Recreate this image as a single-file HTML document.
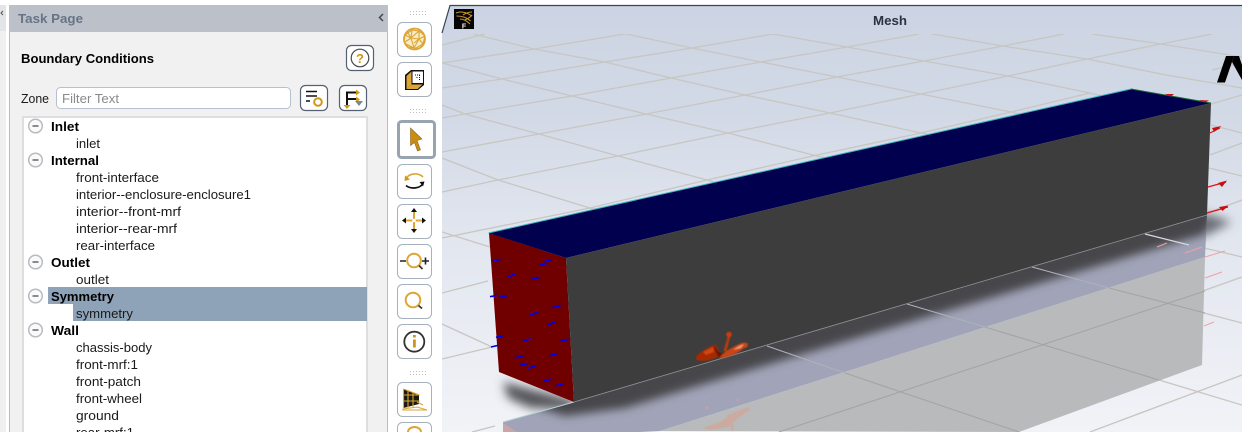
<!DOCTYPE html>
<html><head><meta charset="utf-8"><title>Mesh</title>
<style>
html,body{margin:0;padding:0;background:#fff;width:1242px;height:432px;overflow:hidden}
svg{display:block}
text{font-family:"Liberation Sans",sans-serif;font-size:12.5px;fill:#1a1a1a}
.b{font-weight:bold;fill:#000}
.g line,.g polyline{stroke:#c7c6c2;stroke-width:1.300;fill:none}
.r line{stroke:#a4a4a3;stroke-width:1.100}
.btn{fill:#fff;stroke:#a6b1bd;stroke-width:1}
.dark{fill:#fff;stroke:#566273;stroke-width:1.200}
.m{stroke:#0000f0;stroke-width:1.600}
</style></head><body>
<svg width="1242" height="432" viewBox="0 0 1242 432" xmlns="http://www.w3.org/2000/svg">
<defs>
<linearGradient id="bg" x1="0" y1="0" x2="0" y2="1"><stop offset="0" stop-color="#ccd4e3"/><stop offset=".25" stop-color="#d2d9e6"/><stop offset=".55" stop-color="#e2e6ef"/><stop offset="1" stop-color="#f1f3f7"/></linearGradient>
<filter id="bl" x="-20%" y="-50%" width="140%" height="200%"><feGaussianBlur stdDeviation="4.500"/></filter>
<filter id="bl2" x="-30%" y="-80%" width="160%" height="260%"><feGaussianBlur stdDeviation="5"/></filter>
<filter id="s1"><feGaussianBlur stdDeviation=".5"/></filter>
<clipPath id="gc"><rect x="442" y="34" width="800" height="398"/></clipPath>
<clipPath id="blue"><polygon points="503,422 574,402 1207,215 1205,257 660,431 640,432 503,432"/></clipPath>
</defs>

<!-- left strip -->
<rect x="0" y="5" width="6" height="427" fill="#f0f0f1"/>
<rect x="0" y="5" width="6" height="26" fill="#e2e4e7"/>
<path d="M3 11l-2 2 2 2" stroke="#555" fill="none"/>

<!-- task panel -->
<rect x="9" y="5" width="379" height="427" fill="#f1f1f1"/>
<path d="M9.500 5V432M387.500 5V432" fill="none" stroke="#b9bdc3"/>
<rect x="9" y="5" width="379" height="27" fill="#bcc1c9"/>
<text x="18" y="23" class="b" style="fill:#667487" textLength="65" lengthAdjust="spacingAndGlyphs">Task Page</text>
<path d="M383 14l-3.500 3.500 3.500 3.500" stroke="#404652" stroke-width="1.500" fill="none"/>
<text x="21" y="63" class="b" textLength="133" lengthAdjust="spacingAndGlyphs">Boundary Conditions</text>

<rect x="346.500" y="45.500" width="27" height="25" rx="5" class="dark"/>
<circle cx="360" cy="58" r="8.800" fill="none" stroke="#44494f" stroke-width="1.200"/>
<text x="360" y="63" text-anchor="middle" style="font-size:13px;font-weight:bold;fill:#cf9415">?</text>

<text x="21" y="103" textLength="28" lengthAdjust="spacingAndGlyphs">Zone</text>
<rect x="56.500" y="87.500" width="234" height="21" rx="4" fill="#fff" stroke="#b7c0cf"/>
<text x="62" y="103" style="fill:#8a8a8a" textLength="57" lengthAdjust="spacingAndGlyphs">Filter Text</text>

<rect x="300.500" y="85.500" width="27" height="25" rx="5" class="dark"/>
<path d="M306 91.500h11M306 96h11M306 101h4" stroke="#111" stroke-width="1.600"/>
<circle cx="318" cy="102" r="3.800" fill="none" stroke="#d0961a" stroke-width="2"/>
<rect x="339.500" y="85.500" width="27" height="25" rx="5" class="dark"/>
<path d="M347 106V92.500h10M347 99h9" stroke="#111" stroke-width="2" fill="none"/>
<path d="M356 89.500l4 3-4 3zM356 96.500l4 3-4 3zM343.500 105h7l-3.500 4z" fill="#d0961a"/>
<path d="M355 101h8l-4 5z" fill="#7d8794"/>

<!-- tree -->
<rect x="22" y="116" width="346" height="316" fill="#fff"/>
<path d="M23 432V117H367V432" fill="none" stroke="#dedede" stroke-width="2"/>
<rect x="48" y="287" width="319" height="17" fill="#8ea3b8"/>
<rect x="73" y="304" width="294" height="17" fill="#8ea3b8"/>
<g fill="#fafafa" stroke="#b8bcc2" stroke-width="1.500">
<circle cx="35.500" cy="126" r="6.800"/><circle cx="35.500" cy="160" r="6.800"/><circle cx="35.500" cy="262" r="6.800"/><circle cx="35.500" cy="296" r="6.800"/><circle cx="35.500" cy="330" r="6.800"/>
</g>
<path d="M32.500 126h6M32.500 160h6M32.500 262h6M32.500 296h6M32.500 330h6" stroke="#666" stroke-width="1.500"/>
<text x="51" y="131" class="b" textLength="28" lengthAdjust="spacingAndGlyphs">Inlet</text>
<text x="76" y="148" textLength="24" lengthAdjust="spacingAndGlyphs">inlet</text>
<text x="51" y="165" class="b" textLength="48" lengthAdjust="spacingAndGlyphs">Internal</text>
<text x="76" y="182" textLength="83" lengthAdjust="spacingAndGlyphs">front-interface</text>
<text x="76" y="199" textLength="175" lengthAdjust="spacingAndGlyphs">interior--enclosure-enclosure1</text>
<text x="76" y="216" textLength="105" lengthAdjust="spacingAndGlyphs">interior--front-mrf</text>
<text x="76" y="233" textLength="101" lengthAdjust="spacingAndGlyphs">interior--rear-mrf</text>
<text x="76" y="250" textLength="79" lengthAdjust="spacingAndGlyphs">rear-interface</text>
<text x="51" y="267" class="b" textLength="39" lengthAdjust="spacingAndGlyphs">Outlet</text>
<text x="76" y="284" textLength="33" lengthAdjust="spacingAndGlyphs">outlet</text>
<text x="51" y="301" class="b" textLength="63" lengthAdjust="spacingAndGlyphs">Symmetry</text>
<text x="76" y="318" textLength="57" lengthAdjust="spacingAndGlyphs">symmetry</text>
<text x="51" y="335" class="b" textLength="28" lengthAdjust="spacingAndGlyphs">Wall</text>
<text x="76" y="352" textLength="76" lengthAdjust="spacingAndGlyphs">chassis-body</text>
<text x="76" y="369" textLength="62" lengthAdjust="spacingAndGlyphs">front-mrf:1</text>
<text x="76" y="386" textLength="65" lengthAdjust="spacingAndGlyphs">front-patch</text>
<text x="76" y="403" textLength="66" lengthAdjust="spacingAndGlyphs">front-wheel</text>
<text x="76" y="420" textLength="43" lengthAdjust="spacingAndGlyphs">ground</text>
<text x="76" y="437" textLength="58" lengthAdjust="spacingAndGlyphs">rear-mrf:1</text>

<!-- toolbar -->
<g stroke="#bdbdbd" stroke-width="1" stroke-dasharray="1 2">
<path d="M410 11.500h16M410 14.500h16M410 109.500h16M410 112.500h16M410 371.500h16M410 374.500h16"/>
</g>
<rect x="397.500" y="22.500" width="34" height="34" rx="5" class="btn"/>
<rect x="397.500" y="62.500" width="34" height="34" rx="5" class="btn"/>
<rect x="398.500" y="121.500" width="36" height="36" rx="3" fill="#fff" stroke="#98a4b0" stroke-width="3"/>
<rect x="397.500" y="164.500" width="34" height="34" rx="5" class="btn"/>
<rect x="397.500" y="204.500" width="34" height="34" rx="5" class="btn"/>
<rect x="397.500" y="244.500" width="34" height="34" rx="5" class="btn"/>
<rect x="397.500" y="284.500" width="34" height="34" rx="5" class="btn"/>
<rect x="397.500" y="324.500" width="34" height="34" rx="5" class="btn"/>
<rect x="397.500" y="382.500" width="34" height="34" rx="5" class="btn"/>
<path d="M397.500 432V427.500a5 5 0 0 1 5-5h24a5 5 0 0 1 5 5V432" fill="#fff" stroke="#a6b1bd"/>

<!-- sphere -->
<circle cx="414.500" cy="39" r="10.500" fill="#f8ebc6" stroke="#dca637" stroke-width="1.800"/>
<path d="M405 35l7-5 7 1 6 5-2 8-7 4-8-1-4-6zM412 30l-1 8 8-7 0 8-8-1-6-3M419 39l6-3M419 39l4 5M419 39l-5 9M411 38l3 10M411 38l-6 4M406 44l8 4M408 33l3 5M414 43l5-4" fill="none" stroke="#dca637" stroke-width="1.100"/>
<!-- cube -->
<path d="M405 75l6-5h13v15l-6 5h-13z" fill="#111"/>
<path d="M406.500 76l5-4.500v13l-5 4.500z" fill="#dca637"/>
<path d="M411.500 84.500h11l-5 4.500h-11z" fill="#dca637"/>
<rect x="412.500" y="71.500" width="10.500" height="11.500" fill="#fff"/>
<path d="M415 75h5M419.500 75v5M417 77v1" stroke="#111" stroke-dasharray="1 1" fill="none"/>
<!-- cursor -->
<polygon points="410.500,128 422,139 417,140.500 420.500,150 417.500,151 414.500,142.500 410.500,145.500" fill="#c98d12" stroke="#8a6a25" stroke-width=".6"/>
<!-- rotate -->
<path d="M406.500 178a9.500 7 0 0 1 16.500-1" fill="none" stroke="#dca637" stroke-width="1.700"/>
<path d="M405 175.500l5 4-5.500 1.500z" fill="#d0961a"/>
<path d="M406 185.500a10 7 0 0 0 17-2" fill="none" stroke="#111" stroke-width="1.700"/>
<path d="M424.500 181.500l-5 .5 3.500 4.500z" fill="#111"/>
<!-- move -->
<path d="M414 211v19M405 220.500h18" stroke="#dca637" stroke-width="2"/>
<circle cx="414" cy="220.500" r="1.800" fill="#fff"/>
<path d="M414 208l3 4h-6zM414 233l3-4h-6zM402 220.500l4-3v6zM426 220.500l-4-3v6z" fill="#111"/>
<!-- zoom -->
<circle cx="414" cy="260.500" r="6.800" fill="none" stroke="#dca637" stroke-width="2"/>
<path d="M419 265.500l3.500 3.500" stroke="#333" stroke-width="1.800"/>
<path d="M400 261h6M422 261h7M425.500 257.500v7" stroke="#222" stroke-width="1.600"/>
<!-- fit -->
<circle cx="413" cy="300" r="7.300" fill="none" stroke="#dca637" stroke-width="2"/>
<path d="M418.500 305.500l3.500 3" stroke="#333" stroke-width="1.800"/>
<!-- info -->
<circle cx="414.300" cy="341.700" r="10" fill="none" stroke="#333" stroke-width="1.800"/>
<rect x="413" y="335" width="2.800" height="2.500" fill="#d0961a"/>
<rect x="413" y="339.500" width="2.800" height="8" fill="#d0961a"/>
<!-- bottom icon -->
<polygon points="403.500,389 419,395 419,404 403.500,408" fill="#1a1a10"/>
<path d="M403.500 389l16 6M403.500 395h16M403.500 401l16 0M408 390v18M413 392v15M403.500 389v19M403 409l14-2 10 3H403zM417 402l6 3" stroke="#dca637" stroke-width="1.100" fill="none"/>
<!-- partial -->
<path d="M408 432a6.500 5 0 0 1 13 0" fill="none" stroke="#dca637" stroke-width="2"/>

<!-- viewport -->
<polygon points="450,5.500 1242,5.500 1242,432 442,432 442,33" fill="url(#bg)"/>
<path d="M442 33L450 5.500H1242" fill="none" stroke="#3a4352" stroke-width="1.200"/>

<g class="g" clip-path="url(#gc)">
<line x1="442" y1="45" x2="485" y2="34"/>
<polyline points="442,63 534,49 625,34"/>
<polyline points="442,88 502,79 605,62 692,48 773,34"/>
<polyline points="442,118 465,114 572,96 671,78 761,62 847,47 919,34"/>
<polyline points="442,152 539,134 646,114 745,95 837,77 924,61 1003,46 1064,34"/>
<polyline points="442,192 498,180 618,156 728,133 830,113 921,94 1008,76 1087,59 1161,44 1212,34"/>
<polyline points="442,238 590,208 707,180 817,155 921,133 1011,112 1090,93"/>
<polyline points="442,63 502,79 572,96 646,114 728,133 817,156 900,175"/>
<polyline points="473,34 534,49 605,62 671,78 745,95 830,113 921,133 1000,150"/>
<polyline points="626,34 692,48 761,62 837,77 921,94 1011,112 1090,130"/>
<polyline points="773,34 847,47 924,61 1008,76 1090,93 1130,103"/>
<polyline points="932,34 1003,46 1087,59 1166,75 1242,88"/>
<polyline points="1092,34 1161,44 1242,57"/>
<polyline points="442,105 465,114 539,134 618,156 707,180 750,192"/>
<polyline points="442,158 498,180 590,208 640,222"/>
<line x1="442" y1="232" x2="490" y2="247"/>
<line x1="1208" y1="105" x2="1242" y2="95"/>
<line x1="1210" y1="155" x2="1242" y2="143"/>
<line x1="1207" y1="213" x2="1242" y2="200"/>
<line x1="1211" y1="125" x2="1242" y2="133"/>
<line x1="1209" y1="168" x2="1242" y2="176"/>
<line x1="1212" y1="70" x2="1242" y2="63"/>
<line x1="442" y1="293" x2="488" y2="281"/>
<line x1="442" y1="324" x2="492" y2="347"/>
<line x1="442" y1="359" x2="492" y2="347"/>
<line x1="472" y1="432" x2="495" y2="426"/>
<line x1="1145" y1="234" x2="1242" y2="257"/>
<line x1="1109" y1="288" x2="1242" y2="323"/>
<line x1="1159" y1="380" x2="1242" y2="405"/>
<line x1="1169" y1="303" x2="1242" y2="277"/>
<line x1="1090" y1="432" x2="1242" y2="375"/>
</g>

<!-- shadows on floor -->
<polygon points="503,382 574,400 574,410 530,408 508,398" fill="#55555a" filter="url(#bl2)"/>
<polygon points="1140,226 1207,214 1232,222 1205,236 1160,238" fill="#6a6d75" filter="url(#bl2)"/>

<!-- reflection -->
<polygon points="503,422 574,402 1207,215 1205,257 660,431 640,432 503,432" fill="#a1a4b8"/>
<g clip-path="url(#blue)"><polygon points="530,405 574,392 1230,190 1205,234 950,310 760,367 625,408 565,416" fill="#46474c" filter="url(#bl)"/></g>
<polygon points="660,431 1205,257 1202,365 1019,432" fill="#b8babc"/>
<polygon points="503,423 503,432 517,432" fill="#c9a5a8"/>
<g class="r">
<line x1="779" y1="432" x2="1205" y2="291"/>
<line x1="767" y1="346" x2="845" y2="373" style="stroke:#aeb0bc"/><line x1="845" y1="373" x2="1019" y2="432"/>
<line x1="907" y1="304" x2="985" y2="327" style="stroke:#aeb0bc"/><line x1="985" y1="327" x2="1159" y2="380"/>
<line x1="1032" y1="267" x2="1109" y2="288" style="stroke:#aeb0bc"/><line x1="1109" y1="288" x2="1205" y2="313"/>
<line x1="1145" y1="234" x2="1189" y2="245" style="stroke:#d6d7dd;stroke-width:1.300"/>
</g>
<path d="M1185 253l17-6M1205 257l20-6M1205 278l17-6M1204 326l10-4M1157 247l10-4" stroke="#f0a0a4" stroke-width="1" fill="none"/>
<line x1="574" y1="402" x2="503" y2="422" stroke="#b6d3d6" stroke-width="1"/>
<!-- reflected wheel -->
<g fill="#d3a596" opacity=".75" filter="url(#s1)">
<path d="M703 428l17-6 13-9 15-6 2 3-12 8-10 9-18 3z"/>
<circle cx="707" cy="408" r="1.500"/><circle cx="738" cy="399.500" r="1.300"/>
<path d="M727 415l3-1 4 15-2 2z"/>
</g>

<!-- red arrows -->
<g stroke="#e31212" stroke-width="1.200" fill="#c80f0f">
<path d="M1210 133l10-5M1208 187l18-5M1207 213l21-6" fill="none"/>
<path d="M1212 128l9.500-2-7.500 6z" stroke="none"/>
<path d="M1218 183l9-2.500-5 6.500z" stroke="none"/>
<path d="M1219 207l9.500-1.500-6 5.500z" stroke="none"/>
<path d="M1165 94l9 0-3 2.500z" stroke="none"/>
<path d="M1199 100l10 .5-4 2z" stroke="none"/>
</g>

<!-- box -->
<polygon points="489,233 566,258 574,402 499,372" fill="#700000"/>
<polygon points="488.500,233 1131,89 1211,103 566,258" fill="#00004e"/>
<polygon points="566,258 1211,103 1207,215 574,402" fill="#3d3d3d"/>
<line x1="488.500" y1="233" x2="1131" y2="89" stroke="#35b4c2" stroke-width="1"/>
<line x1="1131" y1="89" x2="1211" y2="103" stroke="#1c6a3a" stroke-width="1"/>
<line x1="574" y1="402" x2="1207" y2="215" stroke="#8e9398" stroke-width=".8"/>
<g class="m">
<line x1="493.300" y1="260.700" x2="500.700" y2="259.300"/><line x1="544" y1="261.700" x2="551.700" y2="259.700"/><line x1="539.300" y1="265" x2="546.700" y2="263.300"/><line x1="507.300" y1="276.700" x2="515" y2="274.300"/><line x1="531.700" y1="279.300" x2="539.300" y2="277.300"/><line x1="490" y1="296.700" x2="497.300" y2="295.300"/><line x1="499.300" y1="297.300" x2="506.700" y2="295.700"/><line x1="552.300" y1="307.700" x2="560.700" y2="305.700"/><line x1="530" y1="314.700" x2="538.300" y2="312.300"/><line x1="547.300" y1="324.700" x2="555.300" y2="322.300"/><line x1="496" y1="337.300" x2="503.300" y2="335.700"/><line x1="523.300" y1="340.700" x2="531.300" y2="339"/><line x1="560.700" y1="341" x2="568.700" y2="339.300"/><line x1="491" y1="347" x2="498.300" y2="345.300"/><line x1="514.700" y1="358" x2="522.700" y2="356"/><line x1="549.700" y1="355.700" x2="557.300" y2="353.700"/><line x1="520" y1="365.300" x2="528.300" y2="363.300"/><line x1="527.300" y1="368.300" x2="535.300" y2="366"/><line x1="544" y1="381.300" x2="552" y2="378.700"/><line x1="555" y1="386" x2="563.300" y2="383.700"/>
</g>

<!-- wheel -->
<g filter="url(#s1)">
<path d="M696 357c3-5 13-10 20-13 1 4 3 8 6 10-6 4-13 7-20 7-5 0-7-2-6-4z" fill="#a52a05"/>
<path d="M703 352c4-2 8-4 10-5l1 5-8 3z" fill="#cf4416"/>
<path d="M715 345c1 5 4 8 9 9l-4 4c-3-2-5-7-6-12z" fill="#6e1802"/>
<path d="M728 335l2.500 .5-4 16-3-.5z" fill="#b43a10"/>
<circle cx="729" cy="334.500" r="2.800" fill="#c73c10"/>
<path d="M719 358c9 0 21-6 25-10 3 0 5-3 3-5-3-1-6 0-10 2-6 3-13 7-18 13z" fill="#c94518"/>
<path d="M733 350l6-4 5-2-3 4z" fill="#f09a70"/>
</g>

<!-- ansys logo fragment -->
<polygon points="1217,82.500 1226,56 1234,56 1225,82.500" fill="#000"/>
<polygon points="1232,62 1234,56 1239,56 1242,65 1242,80" fill="#000"/>

<!-- F icon -->
<rect x="454" y="9" width="20" height="20" fill="#050505"/>
<path d="M456 13c4-2 10-1 16 3M456.500 16c4 0 10 1 14 5M460 19c3 0 7 2 10 5M472 12c-2 0-6 1-9 3M472 15c-1 2-5 4-7 5" fill="none" stroke="#c8962a" stroke-width="1.100"/>
<text x="464" y="28.500" text-anchor="middle" style="font-size:7px;font-weight:bold;fill:#eee">F</text>

<text x="873" y="25" textLength="34" lengthAdjust="spacingAndGlyphs" style="font-size:12.5px;font-weight:bold;fill:#2b3240">Mesh</text>
</svg>
</body></html>
